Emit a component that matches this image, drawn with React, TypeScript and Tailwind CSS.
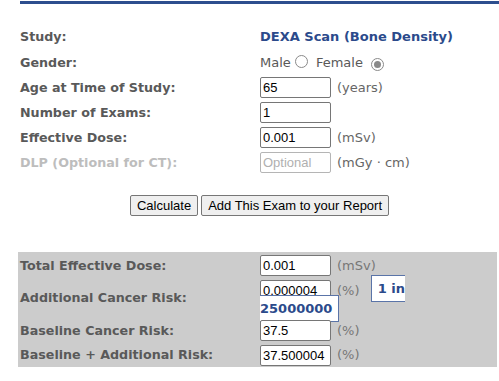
import React from 'react';

const labelCls = "font-bold text-[12.7px] text-[#595959] [font-family:'DejaVu_Sans',Verdana,sans-serif]";
const unitCls = "ml-[6px] text-[13px] text-[#666] [font-family:'DejaVu_Sans',Verdana,sans-serif]";
const inputCls =
  "w-[71px] h-[21px] border border-[#767676] rounded-[2px] bg-white px-[2px] text-[13px] text-black align-middle [font-family:'Liberation_Sans',Arial,sans-serif] outline-none";

function Radio({ checked }: { checked?: boolean }) {
  return (
    <span className="inline-flex items-center justify-center w-[13px] h-[13px] rounded-full border border-[#8a8a8a] bg-white mx-[4px] align-[-1px]">
      {checked && <span className="w-[7px] h-[7px] rounded-full bg-[#8a8a8a]" />}
    </span>
  );
}

function Row({ label, children, muted }: { label: string; children: React.ReactNode; muted?: boolean }) {
  return (
    <div className="flex items-center h-[25px]">
      <div className={`w-[240px] ${labelCls} ${muted ? 'text-[#bdbdbd]' : ''}`}>{label}</div>
      <div className="flex items-center">{children}</div>
    </div>
  );
}

function GrayRow({ label, children }: { label: string; children: React.ReactNode }) {
  return (
    <div className="flex items-center h-[25px]">
      <div className={`w-[242px] pl-[2px] ${labelCls}`}>{label}</div>
      <div className="flex items-center">{children}</div>
    </div>
  );
}

export default function App() {
  return (
    <div className="w-[499px] h-[381px] bg-white overflow-hidden">
      <div className="ml-[20px] mt-[1px] h-[3px] bg-[#2d4e8e]" />

      <div className="pl-[20px] pt-[21px]">
        <div className="flex items-center h-[24px]">
          <div className={`w-[240px] ${labelCls}`}>Study:</div>
          <div className="font-bold text-[13px] text-[#2b4a8b] [font-family:'DejaVu_Sans',Verdana,sans-serif]">
            DEXA Scan (Bone Density)
          </div>
        </div>
        <div className="flex items-center h-[26px] pt-[2px]">
          <div className={`w-[240px] ${labelCls}`}>Gender:</div>
          <div className="text-[13px] text-[#595959] [font-family:'DejaVu_Sans',Verdana,sans-serif]">
            Male<Radio /> Female <Radio checked />
          </div>
        </div>
        <Row label="Age at Time of Study:">
          <input className={inputCls} defaultValue="65" readOnly />
          <span className={unitCls}>(years)</span>
        </Row>
        <Row label="Number of Exams:">
          <input className={inputCls} defaultValue="1" readOnly />
        </Row>
        <Row label="Effective Dose:">
          <input className={inputCls} defaultValue="0.001" readOnly />
          <span className={unitCls}>(mSv)</span>
        </Row>
        <Row label="DLP (Optional for CT):" muted>
          <input
            className={`${inputCls} border-[#b5b5b5] placeholder:text-[#b0b0b0]`}
            placeholder="Optional"
            readOnly
          />
          <span className={unitCls}>(mGy · cm)</span>
        </Row>

        <div className="flex justify-center gap-[3px] mt-[20px] [font-family:'Liberation_Sans',Arial,sans-serif]">
          <button className="h-[21px] px-[6px] border border-[#767676] rounded-[2px] bg-[#efefef] text-[13px] text-black">
            Calculate
          </button>
          <button className="h-[21px] px-[6px] border border-[#767676] rounded-[2px] bg-[#efefef] text-[13px] text-black">
            Add This Exam to your Report
          </button>
        </div>
      </div>

      <div className="ml-[18px] mr-[2px] mt-[36px] bg-[#cccccc] pt-[1px]">
        <GrayRow label="Total Effective Dose:">
          <input className={inputCls} defaultValue="0.001" readOnly />
          <span className={`${unitCls} text-[#777]`}>(mSv)</span>
        </GrayRow>
        <div className="flex items-center h-[40px]">
          <div className={`w-[242px] pl-[2px] ${labelCls}`}>Additional Cancer Risk:</div>
          <div className="w-[175px] leading-[19px] pt-[2px] self-start">
            <input className={`${inputCls} my-[-1px]`} defaultValue="0.000004" readOnly />
            <span className={`${unitCls} text-[#777]`}>(%)</span>{' '}
            <span className="relative -top-[2px] z-10 box-decoration-slice ml-[7px] px-[6px] py-[5px] border border-[#5a74a8] bg-white font-bold text-[13px] text-[#2b4a8b] [font-family:'DejaVu_Sans',Verdana,sans-serif]">
              1 in 25000000
            </span>
          </div>
        </div>
        <GrayRow label="Baseline Cancer Risk:">
          <input className={`${inputCls} relative z-20`} defaultValue="37.5" readOnly />
          <span className={`${unitCls} text-[#777]`}>(%)</span>
        </GrayRow>
        <div className="flex items-center h-[24px]">
          <div className={`w-[242px] pl-[2px] ${labelCls}`}>Baseline + Additional Risk:</div>
          <div className="flex items-center">
            <input className={inputCls} defaultValue="37.500004" readOnly />
            <span className={`${unitCls} text-[#777]`}>(%)</span>
          </div>
        </div>
      </div>
    </div>
  );
}
